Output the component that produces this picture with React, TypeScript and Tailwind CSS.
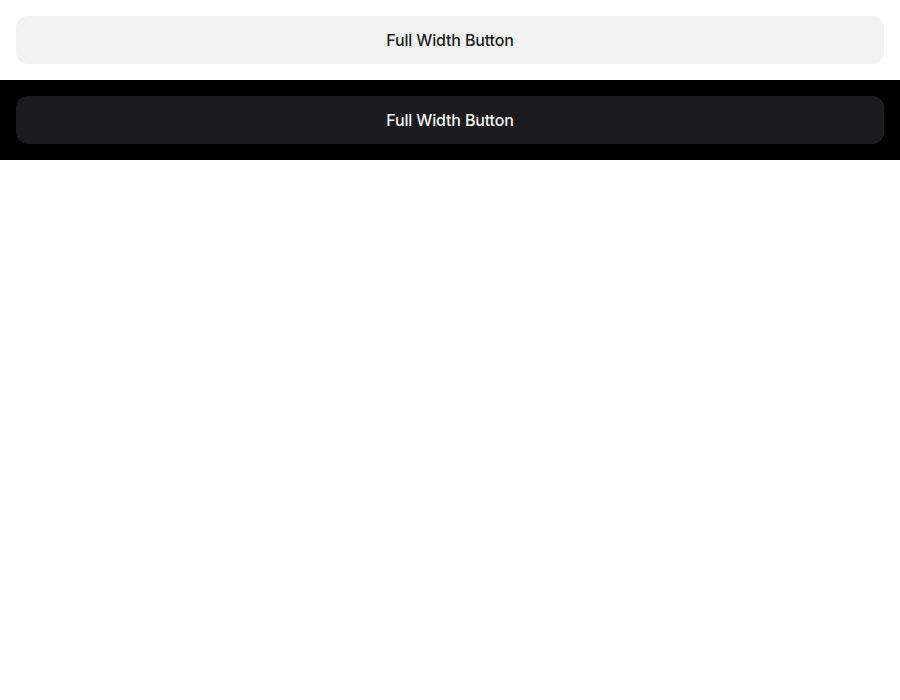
import React from "react";

const FullWidthButton = ({ dark }: { dark?: boolean }) => {
  return (
    <button
      className={
        dark
          ? "w-full h-12 rounded-xl bg-[#1c1c1e] text-[#f5f5f5] text-base font-medium tracking-[-0.01em]"
          : "w-full h-12 rounded-xl bg-[#f2f2f2] text-[#1c1c1e] text-base font-medium tracking-[-0.01em]"
      }
    >
      Full Width Button
    </button>
  );
};

export default function App() {
  return (
    <div className="min-h-[700px] bg-white font-['Inter',sans-serif]">
      <div className="p-4 bg-white">
        <FullWidthButton />
      </div>
      <div className="p-4 bg-black">
        <FullWidthButton dark />
      </div>
    </div>
  );
}
